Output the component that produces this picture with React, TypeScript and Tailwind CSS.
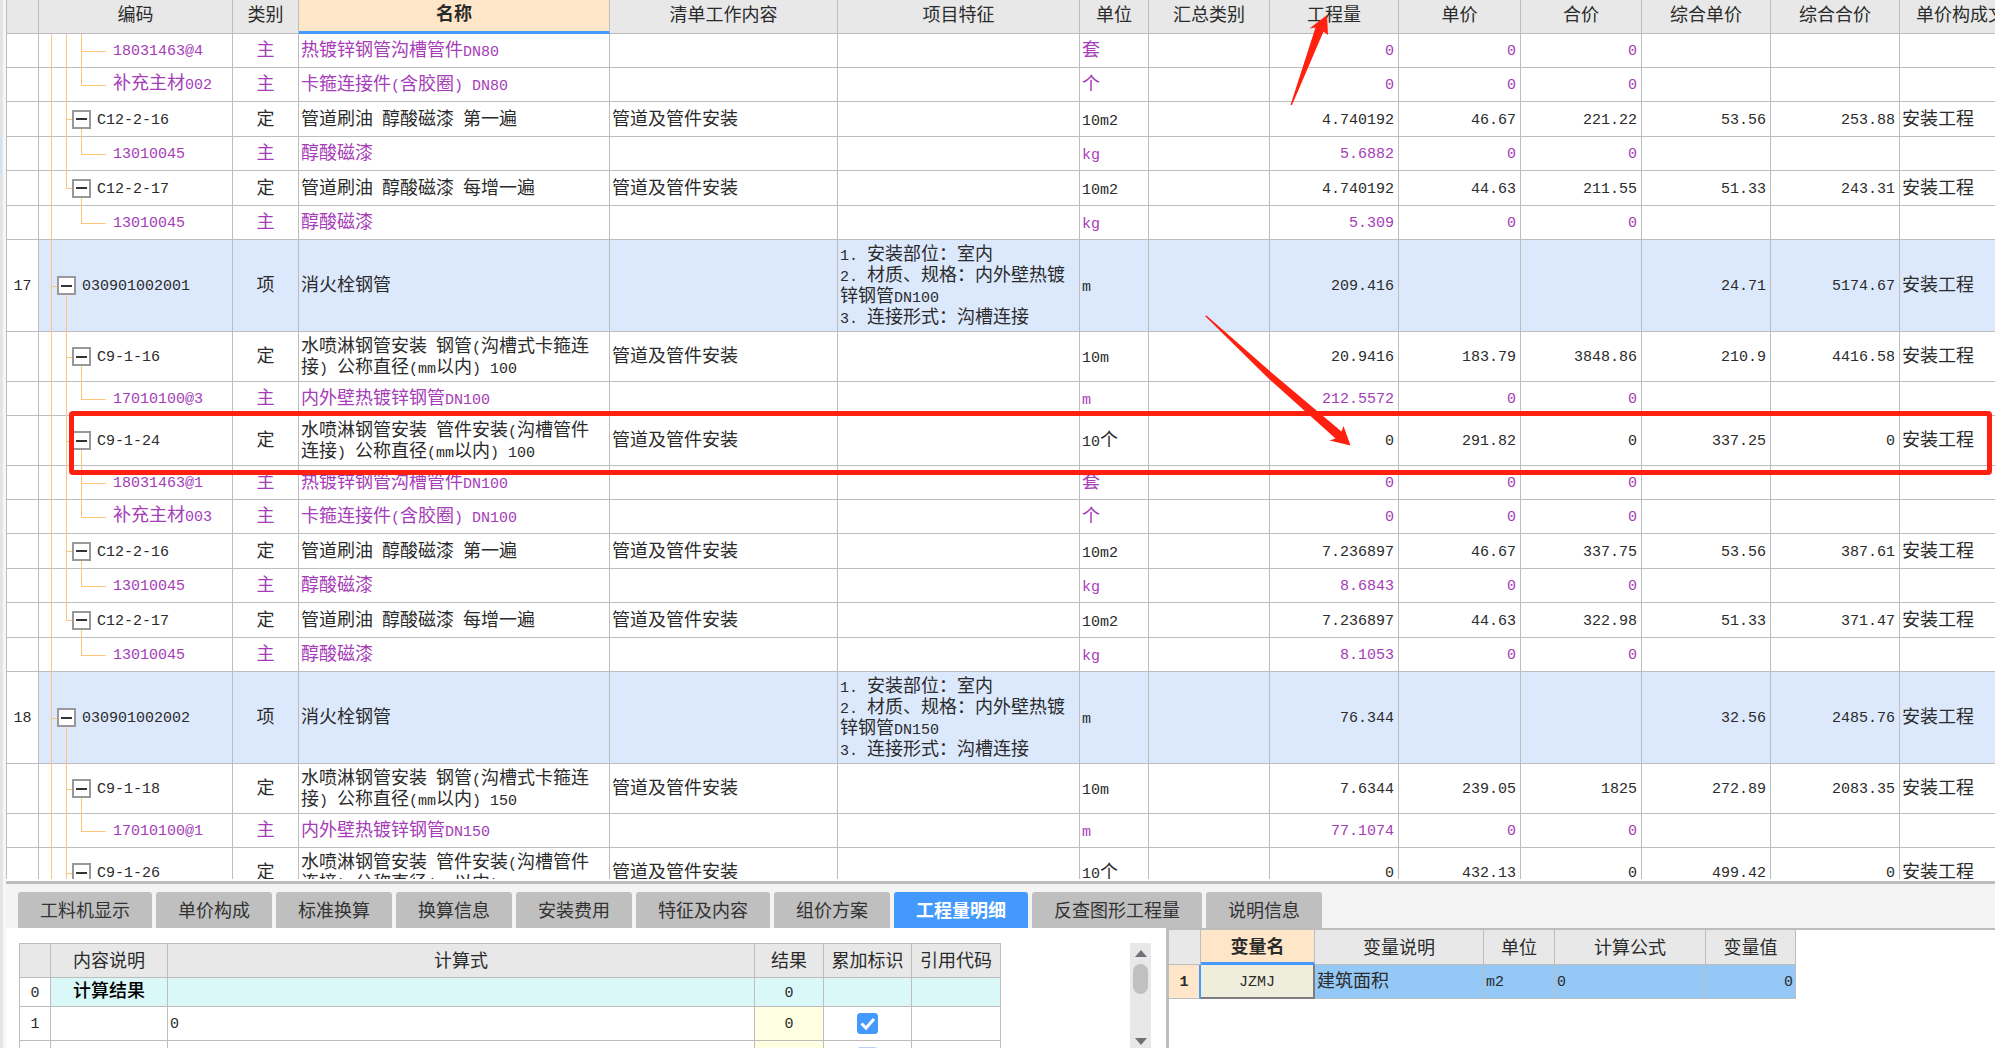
import React, { useState } from "react";
import clsx from "clsx";

type Kind = "item" | "quota" | "material";

type Row = {
  kind: Kind;
  no?: string;
  code: string;
  name: string;
  feature?: string;
  unit: string;
  qty: string;
  price?: string;
  total?: string;
  compPrice?: string;
  compTotal?: string;
  tall?: boolean;
  // last child of its parent
  last?: boolean;
  // the parent quota is the last one in its item
  parentLast?: boolean;
};

const FEATURE = (dn: string) =>
  `1. 安装部位：室内\n2. 材质、规格：内外壁热镀锌钢管${dn}\n3. 连接形式：沟槽连接`;

const rows: Row[] = [
  { kind: "material", code: "18031463@4", name: "热镀锌钢管沟槽管件DN80", unit: "套", qty: "0" },
  { kind: "material", code: "补充主材002", name: "卡箍连接件(含胶圈) DN80", unit: "个", qty: "0", last: true },
  { kind: "quota", code: "C12-2-16", name: "管道刷油 醇酸磁漆 第一遍", unit: "10m2", qty: "4.740192", price: "46.67", total: "221.22", compPrice: "53.56", compTotal: "253.88" },
  { kind: "material", code: "13010045", name: "醇酸磁漆", unit: "kg", qty: "5.6882", last: true },
  { kind: "quota", code: "C12-2-17", name: "管道刷油 醇酸磁漆 每增一遍", unit: "10m2", qty: "4.740192", price: "44.63", total: "211.55", compPrice: "51.33", compTotal: "243.31", last: true },
  { kind: "material", code: "13010045", name: "醇酸磁漆", unit: "kg", qty: "5.309", last: true, parentLast: true },
  { kind: "item", no: "17", code: "030901002001", name: "消火栓钢管", feature: FEATURE("DN100"), unit: "m", qty: "209.416", compPrice: "24.71", compTotal: "5174.67" },
  { kind: "quota", code: "C9-1-16", name: "水喷淋钢管安装 钢管(沟槽式卡箍连接) 公称直径(mm以内) 100", unit: "10m", qty: "20.9416", price: "183.79", total: "3848.86", compPrice: "210.9", compTotal: "4416.58", tall: true },
  { kind: "material", code: "17010100@3", name: "内外壁热镀锌钢管DN100", unit: "m", qty: "212.5572", last: true },
  { kind: "quota", code: "C9-1-24", name: "水喷淋钢管安装 管件安装(沟槽管件连接) 公称直径(mm以内) 100", unit: "10个", qty: "0", price: "291.82", total: "0", compPrice: "337.25", compTotal: "0", tall: true },
  { kind: "material", code: "18031463@1", name: "热镀锌钢管沟槽管件DN100", unit: "套", qty: "0" },
  { kind: "material", code: "补充主材003", name: "卡箍连接件(含胶圈) DN100", unit: "个", qty: "0", last: true },
  { kind: "quota", code: "C12-2-16", name: "管道刷油 醇酸磁漆 第一遍", unit: "10m2", qty: "7.236897", price: "46.67", total: "337.75", compPrice: "53.56", compTotal: "387.61" },
  { kind: "material", code: "13010045", name: "醇酸磁漆", unit: "kg", qty: "8.6843", last: true },
  { kind: "quota", code: "C12-2-17", name: "管道刷油 醇酸磁漆 每增一遍", unit: "10m2", qty: "7.236897", price: "44.63", total: "322.98", compPrice: "51.33", compTotal: "371.47", last: true },
  { kind: "material", code: "13010045", name: "醇酸磁漆", unit: "kg", qty: "8.1053", last: true, parentLast: true },
  { kind: "item", no: "18", code: "030901002002", name: "消火栓钢管", feature: FEATURE("DN150"), unit: "m", qty: "76.344", compPrice: "32.56", compTotal: "2485.76" },
  { kind: "quota", code: "C9-1-18", name: "水喷淋钢管安装 钢管(沟槽式卡箍连接) 公称直径(mm以内) 150", unit: "10m", qty: "7.6344", price: "239.05", total: "1825", compPrice: "272.89", compTotal: "2083.35", tall: true },
  { kind: "material", code: "17010100@1", name: "内外壁热镀锌钢管DN150", unit: "m", qty: "77.1074", last: true },
  { kind: "quota", code: "C9-1-26", name: "水喷淋钢管安装 管件安装(沟槽管件连接) 公称直径(mm以内) 150", unit: "10个", qty: "0", price: "432.13", total: "0", compPrice: "499.42", compTotal: "0", tall: true },
];

const columns = [
  { title: "", width: "w-[32px]" },
  { title: "编码", width: "w-[194px]" },
  { title: "类别", width: "w-[66px]" },
  { title: "名称", width: "w-[311px]" },
  { title: "清单工作内容", width: "w-[228px]" },
  { title: "项目特征", width: "w-[242px]" },
  { title: "单位", width: "w-[69px]" },
  { title: "汇总类别", width: "w-[121px]" },
  { title: "工程量", width: "w-[129px]" },
  { title: "单价", width: "w-[122px]" },
  { title: "合价", width: "w-[121px]" },
  { title: "综合单价", width: "w-[129px]" },
  { title: "综合合价", width: "w-[129px]" },
  { title: "单价构成文件", width: "w-[141px]" },
];

const tabs = [
  "工料机显示",
  "单价构成",
  "标准换算",
  "换算信息",
  "安装费用",
  "特征及内容",
  "组价方案",
  "工程量明细",
  "反查图形工程量",
  "说明信息",
];

const kindLabel = { item: "项", quota: "定", material: "主" };

// latin runs are set smaller so that two of them take the width of one han character
const T = ({ children }: { children?: string }) => (
  <>
    {(children || "").split(/([\x20-\x7e]+)/).map((part, i) =>
      i % 2 ? (
        <span key={i} className="text-[15px] leading-none">
          {part}
        </span>
      ) : (
        part
      )
    )}
  </>
);

const Toggle = () => (
  <button
    aria-label="折叠"
    className="relative flex h-[19px] w-[19px] shrink-0 items-center justify-center border-2 border-[#999] bg-white"
  >
    <span className="h-[2px] w-[11px] bg-[#333]" />
  </button>
);

const Line = ({ className }: { className: string }) => (
  <span className={clsx("absolute bg-[#ffc57a]", className)} />
);

const CodeCell = ({ row }: { row: Row }) => {
  const { kind, last, parentLast } = row;
  return (
    <td className="relative border-r border-b border-[#bdbdbd]">
      <Line className="-bottom-px left-[12px] top-0 w-px" />
      {kind === "item" && (
        <>
          <Line className="left-[12px] top-1/2 h-px w-[8px]" />
          <Line className="-bottom-px left-[27px] top-1/2 w-px" />
        </>
      )}
      {kind === "quota" && (
        <>
          <Line className={clsx("left-[27px] top-0 w-px", last ? "bottom-1/2" : "-bottom-px")} />
          <Line className="left-[27px] top-1/2 h-px w-[8px]" />
          <Line className="-bottom-px left-[42px] top-1/2 w-px" />
        </>
      )}
      {kind === "material" && (
        <>
          {!parentLast && <Line className="-bottom-px left-[27px] top-0 w-px" />}
          <Line className={clsx("left-[42px] top-0 w-px", last ? "bottom-1/2" : "-bottom-px")} />
          <Line className="left-[42px] top-1/2 h-px w-[25px]" />
        </>
      )}
      <div
        className={clsx(
          "flex items-center gap-[6px] whitespace-nowrap",
          kind === "item" && "pl-[18px]",
          kind === "quota" && "pl-[33px]",
          kind === "material" && "pl-[74px]"
        )}
      >
        {kind !== "material" && <Toggle />}
        <span>
          <T>{row.code}</T>
        </span>
      </div>
    </td>
  );
};

const cell = "border-r border-b border-[#bdbdbd] px-[2px] pt-[2px]";
const num = "border-r border-b border-[#bdbdbd] pr-1 text-right";

const GridRow = ({ row }: { row: Row }) => {
  const material = row.kind === "material";
  return (
    <tr
      className={clsx(
        material && "h-[34px] text-[#a63cb8]",
        row.kind === "item" && "h-[92px] bg-[#dce9fd]",
        row.kind === "quota" && (row.tall ? "h-[50px]" : "h-[35px]")
      )}
    >
      <td className="border-r border-b border-[#bdbdbd] bg-white text-center">
        <T>{row.no}</T>
      </td>
      <CodeCell row={row} />
      <td className={clsx(cell, "text-center")}>{kindLabel[row.kind]}</td>
      <td className={cell}>
        <T>{row.name}</T>
      </td>
      <td className={cell}>{row.kind === "quota" && "管道及管件安装"}</td>
      <td className={clsx(cell, "whitespace-pre-line")}>
        <T>{row.feature}</T>
      </td>
      <td className={cell}>
        <T>{row.unit}</T>
      </td>
      <td className={cell} />
      <td className={num}>
        <T>{row.qty}</T>
      </td>
      <td className={num}>
        <T>{material ? "0" : row.price}</T>
      </td>
      <td className={num}>
        <T>{material ? "0" : row.total}</T>
      </td>
      <td className={num}>
        <T>{row.compPrice}</T>
      </td>
      <td className={num}>
        <T>{row.compTotal}</T>
      </td>
      <td className={cell}>{!material && "安装工程"}</td>
    </tr>
  );
};

const MainGrid = () => (
  <div className="relative min-h-0 flex-1 overflow-hidden">
    <table className="w-full min-w-[2035px] table-fixed border-separate border-spacing-0 border-l border-[#bdbdbd] leading-[21px]">
      <colgroup>
        {columns.map((c, i) => (
          <col key={i} className={c.width} />
        ))}
      </colgroup>
      <thead>
        <tr className="h-[34px] bg-[#e8e8e8]">
          {columns.map((c, i) => (
            <th
              key={i}
              className={clsx(
                "border-r whitespace-nowrap",
                c.title === "名称"
                  ? "border-b-[3px] border-r-[#bdbdbd] border-b-[#4499ff] bg-[#ffe6c8] font-bold"
                  : "border-b border-[#bdbdbd] font-normal"
              )}
            >
              {c.title}
            </th>
          ))}
        </tr>
      </thead>
      <tbody>
        {rows.map((row, i) => (
          <GridRow key={i} row={row} />
        ))}
      </tbody>
    </table>
    {/* annotations over the grid */}
    <div className="absolute left-[63px] right-[3px] top-[411px] h-[64px] rounded-[4px] border-[5px] border-[#ff2010]" />
    <svg
      className="absolute left-[1199px] top-0"
      width="160"
      height="450"
      viewBox="1205 0 160 450"
      fill="#ff2010"
      aria-hidden="true"
    >
      <path d="M1290.5 105 L1315.5 27.5 L1309.5 28.5 L1327 15 L1328 35 L1323.5 31.5 L1292 105 Z" />
      <path d="M1205 316 L1206.5 315.5 L1272 373 L1341.5 431.5 L1343.5 426 L1350.5 445.5 L1329.5 440.5 L1335.5 438.5 L1268 378 Z" />
    </svg>
  </div>
);

const DetailTable = () => {
  const [checked, setChecked] = useState([true, false]);
  const th = "border-r border-b border-[#bdbdbd] pt-1 font-normal";
  const td = "border-r border-b border-[#bdbdbd]";

  return (
    <table className="w-[982px] table-fixed border-separate border-spacing-0 border-l border-t border-[#bdbdbd] leading-[21px]">
      <colgroup>
        <col className="w-[31px]" />
        <col className="w-[117px]" />
        <col className="w-[587px]" />
        <col className="w-[69px]" />
        <col className="w-[88px]" />
        <col className="w-[89px]" />
      </colgroup>
      <thead>
        <tr className="h-[34px] bg-[#e8e8e8]">
          <th className={th} />
          <th className={th}>内容说明</th>
          <th className={th}>计算式</th>
          <th className={th}>结果</th>
          <th className={th}>累加标识</th>
          <th className={th}>引用代码</th>
        </tr>
      </thead>
      <tbody>
        <tr className="h-[29px] bg-[#daf8f8]">
          <td className={clsx(td, "bg-white text-center")}>
            <T>0</T>
          </td>
          <td className={clsx(td, "text-center font-medium text-black")}>计算结果</td>
          <td className={td} />
          <td className={clsx(td, "text-center")}>
            <T>0</T>
          </td>
          <td className={td} />
          <td className={td} />
        </tr>
        {checked.map((on, i) => (
          <tr key={i} className="h-[34px]">
            <td className={clsx(td, "text-center")}>
              <T>{String(i + 1)}</T>
            </td>
            <td className={td} />
            <td className={clsx(td, "px-[2px]")}>
              <T>{i === 0 ? "0" : ""}</T>
            </td>
            <td className={clsx(td, "bg-[#ffffe2] text-center")}>
              <T>{i === 0 ? "0" : ""}</T>
            </td>
            <td className={td}>
              <label className="relative mx-auto block h-[21px] w-[21px]">
                <input
                  type="checkbox"
                  aria-label="累加标识"
                  checked={on}
                  onChange={() => setChecked(checked.map((c, j) => (j === i ? !c : c)))}
                  className="block h-[21px] w-[21px] appearance-none rounded-[3px] border border-[#b9d3f5] bg-white checked:border-[#4499ff] checked:bg-[#4499ff]"
                />
                {on && (
                  <svg className="absolute left-0 top-0" width="21" height="21" viewBox="0 0 21 21" fill="none" aria-hidden="true">
                    <path d="M4.5 10.5 L9 15 L17 6" stroke="white" strokeWidth="3" />
                  </svg>
                )}
              </label>
            </td>
            <td className={td} />
          </tr>
        ))}
      </tbody>
    </table>
  );
};

const VariableTable = () => {
  const th = "border-r border-b border-[#bdbdbd] pt-1 font-normal";
  const td = "border-r border-b border-[#bdbdbd] px-[2px]";

  return (
    <table className="w-[627px] table-fixed border-separate border-spacing-0 leading-[21px]">
      <colgroup>
        <col className="w-[32px]" />
        <col className="w-[114px]" />
        <col className="w-[169px]" />
        <col className="w-[71px]" />
        <col className="w-[151px]" />
        <col className="w-[90px]" />
      </colgroup>
      <thead>
        <tr className="h-[35px] bg-[#e8e8e8]">
          <th className={th} />
          <th className="border-r border-b-[3px] border-r-[#bdbdbd] border-b-[#4499ff] bg-[#ffe6c8] pt-1 font-bold">
            变量名
          </th>
          <th className={th}>变量说明</th>
          <th className={th}>单位</th>
          <th className={th}>计算公式</th>
          <th className={th}>变量值</th>
        </tr>
      </thead>
      <tbody>
        <tr className="h-[34px] bg-[#93c8f7]">
          <td className="border-b border-r-2 border-b-[#bdbdbd] border-r-[#4499ff] bg-[#ffe6c8] text-center font-bold">
            <T>1</T>
          </td>
          <td className="border-b-2 border-r-2 border-[#7d7d7d] bg-[#efeedd] text-center">
            <T>JZMJ</T>
          </td>
          <td className={clsx(td, "pt-[2px]")}>建筑面积</td>
          <td className={td}>
            <T>m2</T>
          </td>
          <td className={td}>
            <T>0</T>
          </td>
          <td className={clsx(td, "text-right")}>
            <T>0</T>
          </td>
        </tr>
      </tbody>
    </table>
  );
};

const Scrollbar = () => (
  <div className="flex w-[21px] shrink-0 flex-col items-center justify-between bg-[#e8e8e8] py-[7px]">
    <svg width="12" height="7" viewBox="0 0 12 7" fill="#707078" aria-hidden="true">
      <path d="M6 0 L12 7 H0 Z" />
    </svg>
    <div className="mb-auto mt-[7px] h-[30px] w-[15px] rounded-full bg-[#c0c0c0]" />
    <svg className="-mb-[4px]" width="12" height="7" viewBox="0 0 12 7" fill="#707078" aria-hidden="true">
      <path d="M6 7 L12 0 H0 Z" />
    </svg>
  </div>
);

const App = () => {
  const [active, setActive] = useState("工程量明细");

  return (
    <div className="flex h-screen overflow-hidden bg-white font-['Liberation_Mono','Noto_Sans_CJK_SC',monospace] text-[18px] text-[#2b2b2b]">
      <div className="w-[6px] shrink-0 border-l-[3px] border-[#e4e4e4] bg-[#f7f7f7] pt-[137px]">
        <div className="-ml-[3px] h-[38px] w-[2px] bg-[#cfe3fa]" />
      </div>
      <div className="flex min-w-0 flex-1 flex-col">
        <MainGrid />
        <div className="h-[169px] shrink-0 pt-[2px]">
          <div className="border-t-[3px] border-[#bdbdbd] bg-[#f4f4f4] pt-2">
            <div role="tablist" className="flex gap-1 pl-3">
              {tabs.map((tab) => (
                <button
                  key={tab}
                  role="tab"
                  aria-selected={tab === active}
                  onClick={() => setActive(tab)}
                  className={clsx(
                    "h-[36px] whitespace-nowrap rounded-t-[3px] px-[22px] pt-1",
                    tab === active
                      ? "bg-[#4499ff] font-bold text-white"
                      : "bg-[#bfbfbf] text-[#333]"
                  )}
                >
                  {tab}
                </button>
              ))}
            </div>
          </div>
          <div className="flex h-[120px] overflow-hidden">
            <div className="flex flex-[1132_0_0] overflow-hidden pl-[13px] pr-[15px] pt-[15px]">
              <div className="min-w-0 flex-1">
                <DetailTable />
              </div>
              <Scrollbar />
            </div>
            <div className="flex-[826_0_0] overflow-hidden border-l-[3px] border-t-2 border-[#bdbdbd]">
              <VariableTable />
            </div>
          </div>
        </div>
      </div>
    </div>
  );
};

export default App;
